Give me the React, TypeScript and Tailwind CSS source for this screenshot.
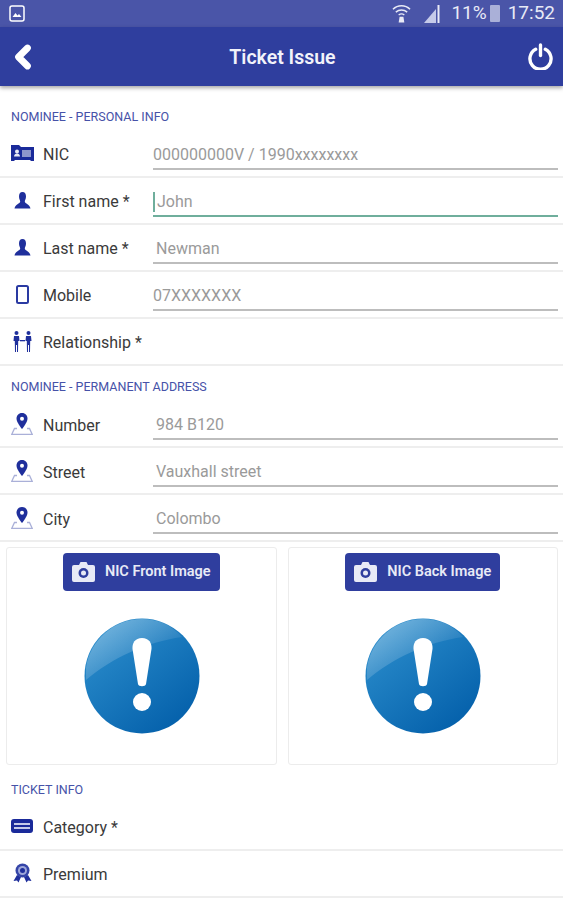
import { ChevronLeft } from 'lucide-react';
import type { ReactNode } from 'react';

function IdIcon() {
  return (
    <svg width="23" height="16" viewBox="0 0 23 16">
      <path d="M0 0h8l2 2h13v14h-3l-1-1H4l-1 1H0z" fill="#1a2a9a" />
      <circle cx="6" cy="6.500" r="2" fill="#e8eaf6" />
      <path d="M3 11.500c0-2 1.500-3 3-3s3 1 3 3z" fill="#e8eaf6" />
      <rect x="11" y="5" width="9" height="7" fill="#8e96cc" />
    </svg>
  );
}

function PersonIcon() {
  return (
    <svg width="17" height="17" viewBox="0 0 17 17">
      <path d="M8.500 0C6 0 5 2 5 4.500 5 7 6.200 8 6.200 9.500 6.200 11.500 1 12.500 .5 16.500h16C16 12.500 10.800 11.500 10.800 9.500 10.800 8 12 7 12 4.500 12 2 11 0 8.500 0z" fill="#1f2f9c" />
    </svg>
  );
}

function PhoneIcon() {
  return (
    <svg width="13" height="19" viewBox="0 0 13 19">
      <rect x="1" y="1" width="11" height="17" rx="1.500" fill="none" stroke="#2a3aa2" strokeWidth="2" />
    </svg>
  );
}

function PeopleIcon() {
  return (
    <svg width="21" height="21" viewBox="0 0 21 21">
      <g fill="#1f2f9c">
        <circle cx="4.500" cy="2" r="2" />
        <circle cx="16.500" cy="2" r="2" />
        <path d="M2 5h5l.5 5H6.200L6 21H5v-7H4v7H3L2.800 10H1.500z" />
        <path d="M14 5h5l.5 5h-1.300L18 21h-1v-7h-1v7h-1l-.2-11h-1.300z" />
        <rect x="8" y="9" width="5" height="1.300" />
      </g>
    </svg>
  );
}

function PinIcon() {
  return (
    <svg width="22" height="22" viewBox="0 0 22 22">
      <path d="M11 0C7.500 0 5.500 2.500 5.500 5.800 5.500 9.500 11 16 11 16s5.500-6.500 5.500-10.200C16.500 2.500 14.500 0 11 0z" fill="#1f2f9c" />
      <circle cx="11" cy="5.800" r="2" fill="#fff" />
      <path d="M6 15.500H3.500L.8 21.300h20.400l-2.700-5.800H16" fill="none" stroke="#aab0d8" strokeWidth="1.300" />
    </svg>
  );
}

function CategoryIcon() {
  return (
    <svg width="22" height="14" viewBox="0 0 22 14">
      <rect width="22" height="14" rx="3" fill="#1a2a9a" />
      <rect x="3" y="4" width="16" height="2" fill="#c5cae9" />
      <rect x="3" y="8" width="16" height="2" fill="#c5cae9" />
    </svg>
  );
}

function RibbonIcon() {
  return (
    <svg width="19" height="20" viewBox="0 0 19 20">
      <path d="M4 12 0.500 18l3.500-.5L5.500 19.500 8 14zM15 12l3.500 6-3.500-.5-1.500 2L11 14z" fill="#1f2f9c" />
      <circle cx="9.500" cy="7.500" r="7" fill="#3545a8" />
      <circle cx="9.500" cy="7.500" r="4.500" fill="#9fa8da" />
      <circle cx="9.500" cy="7.500" r="2.500" fill="#1f2f9c" />
    </svg>
  );
}

function PowerIcon() {
  return (
    <svg width="25" height="27" viewBox="0 0 26 28" fill="none" stroke="#fff" strokeWidth="3.500" strokeLinecap="round">
      <path d="M8 6.500a11 11 0 1 0 10 0" />
      <path d="M13 2v11" />
    </svg>
  );
}

function CameraIcon() {
  return (
    <svg width="23" height="20" viewBox="0 0 23 20">
      <path d="M2 3h5l1.500-3h6L16 3h5a2 2 0 0 1 2 2v13a2 2 0 0 1-2 2H2a2 2 0 0 1-2-2V5a2 2 0 0 1 2-2z" fill="#e8eaf6" />
      <circle cx="11.500" cy="11" r="5" fill="#2f3e9e" />
      <circle cx="11.500" cy="11" r="2.500" fill="#e8eaf6" />
    </svg>
  );
}

function AlertBadge({ id }: { id: string }) {
  return (
    <svg width="116" height="116" viewBox="0 0 116 116">
      <defs>
        <linearGradient id={id} x1="0.150" y1="0.100" x2="0.800" y2="0.900">
          <stop offset="0" stopColor="#2a8ccb" />
          <stop offset="1" stopColor="#0662ac" />
        </linearGradient>
        <linearGradient id={`${id}Gloss`} x1="0" y1="0" x2="0.700" y2="0.700">
          <stop offset="0" stopColor="#fff" stopOpacity="0.400" />
          <stop offset="1" stopColor="#fff" stopOpacity="0.050" />
        </linearGradient>
      </defs>
      <circle cx="58" cy="58" r="57.500" fill={`url(#${id})`} />
      <path d="M2 50C6 22 30 1 58 1c16 0 30 6 40 18C62 24 28 40 2 62z" fill={`url(#${id}Gloss)`} />
      <path d="M58 20c7 0 10 5 9.500 11L62 66c-.5 3-7.500 3-8 0l-5.500-35C48 25 51 20 58 20z" fill="#fff" />
      <circle cx="58" cy="84" r="9" fill="#fff" />
    </svg>
  );
}

function SectionLabel({ children, className }: { children: ReactNode; className: string }) {
  return <div className={`pl-[11px] text-[12.500px] leading-none text-[#4652a8] ${className}`}>{children}</div>;
}

function Row({
  icon,
  label,
  value,
  tone = 'gray',
  indent = true,
}: {
  icon: ReactNode;
  label: string;
  value?: string;
  tone?: 'gray' | 'focus';
  indent?: boolean;
}) {
  return (
    <div className="flex h-[47px] items-center border-b-2 border-[#eeeeee]">
      <div className="flex w-[43px] shrink-0 justify-center pl-[1px]">{icon}</div>
      <div className="w-[110px] shrink-0 pt-[4px] text-[16px] text-[#3a3a3a]">{label}</div>
      {value && (
        <div
          className={`mr-[5px] flex h-[33px] flex-1 items-center border-b-2 pt-[5px] text-[16px] text-[#9a9a9a] ${
            tone === 'focus' ? 'border-[#6fae9c]' : 'border-[#bdbdbd]'
          } ${indent ? 'pl-[3px]' : ''}`}
        >
          {tone === 'focus' && <span className="mr-[2px] -ml-[3px] h-[20px] w-[2px] bg-[#6fae9c]" />}
          {value}
        </div>
      )}
    </div>
  );
}

function ImageCard({ label, id }: { label: string; id: string }) {
  return (
    <div className="flex h-[218px] flex-1 flex-col items-center rounded-[3px] border border-[#ececec] pt-[5px]">
      <div className="flex h-[38px] items-center gap-[10px] rounded-[4px] bg-[#2f3e9e] px-[9px] text-[14.500px] font-semibold text-[#e8eaf6]">
        <CameraIcon />
        {label}
      </div>
      <div className="mt-[27px] pl-[1px]">
        <AlertBadge id={id} />
      </div>
    </div>
  );
}

export default function App() {
  return (
    <div className="h-[900px] w-[563px] overflow-hidden bg-white font-['Roboto',sans-serif]">
      {/* Status bar */}
      <div className="flex h-[27px] items-center justify-between bg-[#4a55a8] pl-[9px] pr-[8px] text-[#e8eaf6]">
        <svg width="16" height="17" viewBox="0 0 16 17">
          <rect x="1" y="1" width="14" height="15" rx="2" fill="none" stroke="#fff" strokeWidth="1.500" />
          <path d="M3.500 12l3-4 2 2.500L10 9l2.500 3z" fill="#fff" />
        </svg>
        <div className="flex items-center text-[19px]">
          <svg width="19" height="20" viewBox="0 0 20 20" fill="none" stroke="#e8eaf6" strokeWidth="1.500">
            <path d="M1 5c5-5 13-5 18 0M4 8c3.500-3 8.500-3 12 0M7 11c2-1.500 4-1.500 6 0" />
            <path d="M8 13h4l1 6H7z" fill="#e8eaf6" stroke="none" />
          </svg>
          <svg className="ml-[13px]" width="16" height="18" viewBox="0 0 16 18">
            <path d="M0 18 12 4v14z" fill="#c5cae9" />
            <rect x="13.500" y="0" width="2" height="18" fill="#e8eaf6" />
          </svg>
          <span className="ml-[11px]">11%</span>
          <span className="ml-[3px] h-[17px] w-[10px] rounded-[1px] bg-[#aab0d8]" />
          <span className="ml-[8px]">17:52</span>
        </div>
      </div>

      {/* App bar */}
      <div className="flex h-[59px] items-center justify-between bg-[#2f3e9e] pl-[5px] pr-[10px] shadow-[0_2px_4px_rgba(0,0,0,0.35)]">
        <ChevronLeft size={36} strokeWidth={4.500} color="#fff" />
        <div className="pt-[3px] pr-[4px] text-[19.500px] font-semibold text-[#f2f3fa]">Ticket Issue</div>
        <PowerIcon />
      </div>

      <SectionLabel className="pt-[25px] pb-[7px]">NOMINEE - PERSONAL INFO</SectionLabel>
      <Row icon={<IdIcon />} label="NIC" value="000000000V / 1990xxxxxxxx" indent={false} />
      <Row icon={<PersonIcon />} label="First name *" value="John" tone="focus" />
      <Row icon={<PersonIcon />} label="Last name *" value="Newman" />
      <Row icon={<PhoneIcon />} label="Mobile" value="07XXXXXXX" indent={false} />
      <Row icon={<PeopleIcon />} label="Relationship *" />

      <SectionLabel className="pt-[15px] pb-[8px]">NOMINEE - PERMANENT ADDRESS</SectionLabel>
      <Row icon={<PinIcon />} label="Number" value="984 B120" />
      <Row icon={<PinIcon />} label="Street" value="Vauxhall street" />
      <Row icon={<PinIcon />} label="City" value="Colombo" />

      <div className="mt-[5px] flex gap-[11px] pl-[6px] pr-[5px]">
        <ImageCard label="NIC Front Image" id="badgeFront" />
        <ImageCard label="NIC Back Image" id="badgeBack" />
      </div>

      <SectionLabel className="pt-[19px] pb-[7px]">TICKET INFO</SectionLabel>
      <Row icon={<CategoryIcon />} label="Category *" />
      <Row icon={<RibbonIcon />} label="Premium" />
    </div>
  );
}
